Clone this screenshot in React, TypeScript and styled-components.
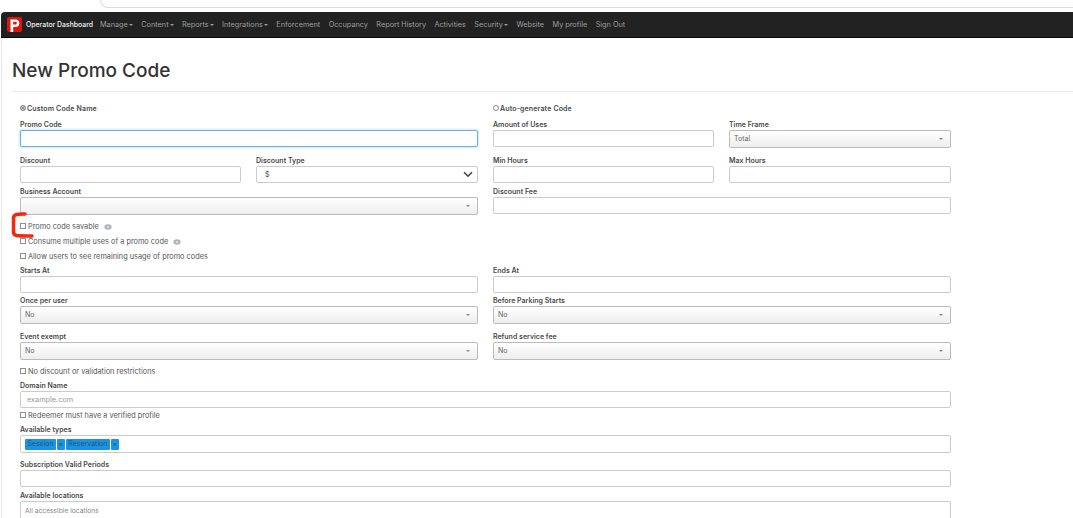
import React from "react";
import styled, { createGlobalStyle } from "styled-components";

const Global = createGlobalStyle`
  html, body { margin: 0; padding: 0; height: 518px; overflow: hidden; background: #fff; }
  body { font-family: Inter, "Open Sans", "Liberation Sans", sans-serif; color: #444; }
  * { box-sizing: border-box; }
`;

const Page = styled.div`
  position: relative;
  width: 1073px;
  height: 518px;
  overflow: hidden;
`;

const BrowserEdge = styled.div`
  height: 12px;
  padding-left: 100px;
`;

const BrowserBar = styled.div`
  height: 8px;
  border-left: 1px solid #ddd;
  border-bottom: 1px solid #ddd;
  border-bottom-left-radius: 9px;
`;

const Frame = styled.div`
  margin-left: 1px;
  border-left: 1px solid #e6e6e6;
  height: 506px;
`;

const Navbar = styled.nav`
  height: 26px;
  background: #222;
  border-bottom: 1px solid #080808;
  border-top-left-radius: 4px;
  display: flex;
  align-items: center;
  padding-left: 6px;
  margin-left: -1px;
`;

const Logo = styled.svg`
  width: 15px;
  height: 15px;
  flex: none;
  margin-right: 4px;
`;

const Brand = styled.a`
  font-size: 6.9px;
  font-weight: 500;
  color: #f2f2f2;
  margin-right: 7px;
  white-space: nowrap;
`;

const NavItem = styled.a`
  font-size: 7.3px;
  color: #9d9d9d;
  margin-right: 8.4px;
  white-space: nowrap;
  display: inline-flex;
  align-items: center;
`;

const Caret = styled.i`
  display: inline-block;
  width: 0;
  height: 0;
  margin-left: 1px;
  border-left: 2px solid transparent;
  border-right: 2px solid transparent;
  border-top: 2px solid currentColor;
`;

const Header = styled.header`
  margin-left: 10px;
  height: 54px;
  border-bottom: 1px solid #e8e8e8;
  display: flex;
  align-items: flex-end;
  padding-bottom: 9px;
`;

const Title = styled.h1`
  margin: 0;
  font-size: 19px;
  line-height: 22px;
  font-weight: 500;
  color: #333;
`;

const Form = styled.form`
  padding: 11px 0 0 18px;
  width: 949px;
  display: flex;
  flex-direction: column;
`;

const Row = styled.div<{ $mb?: number }>`
  display: grid;
  grid-template-columns: 221px 222px 221px 222px;
  column-gap: 15px;
  margin-bottom: ${(p) => p.$mb ?? 0}px;
`;

const Field = styled.div<{ $span?: number }>`
  grid-column: span ${(p) => p.$span ?? 1};
  min-width: 0;
`;

const Label = styled.label`
  display: block;
  height: 10px;
  line-height: 12px;
  margin-bottom: 1px;
  font-size: 7px;
  font-weight: 600;
  color: #4a4a4a;
  white-space: nowrap;
`;

const RadioLabel = styled(Label)`
  display: flex;
  align-items: center;
  line-height: 10px;
  margin-bottom: 0;
  padding-top: 2px;
  letter-spacing: 0.15px;
`;

const Radio = styled.input`
  appearance: none;
  width: 6px;
  height: 6px;
  margin: 0 1px 2px 0;
  border: 1px solid #8a8a8a;
  border-radius: 50%;
  background: #fff;
  &:checked { background: #777; box-shadow: inset 0 0 0 1px #ddd; }
`;

const TextInput = styled.input<{ $h?: number; $focus?: boolean }>`
  display: block;
  width: 100%;
  height: ${(p) => p.$h ?? 17}px;
  padding: 0 6px;
  border: 1px solid ${(p) => (p.$focus ? "#66afe9" : "#ccc")};
  border-radius: 2px;
  background: #fff;
  font: inherit;
  font-size: 7.3px;
  color: #555;
  outline: none;
  box-shadow: ${(p) => (p.$focus ? "0 0 3px rgba(102,175,233,.6)" : "none")};
  &::placeholder { color: #999; }
`;

const SelectBox = styled.div<{ $h?: number }>`
  height: ${(p) => p.$h ?? 18}px;
  padding: 0 7px 1px 4px;
  border: 1px solid #bbb;
  border-radius: 2px;
  background: linear-gradient(#fff, #eee);
  display: flex;
  align-items: center;
  justify-content: space-between;
  font-size: 7px;
  color: #666;
`;

const NativeSelect = styled.div`
  height: 17px;
  padding: 0 4px 0 8px;
  border: 1px solid #ccc;
  border-radius: 2px;
  background: #fff;
  display: flex;
  align-items: center;
  justify-content: space-between;
  font-size: 7.3px;
  color: #555;
`;

const SmallCaret = styled.i`
  width: 0;
  height: 0;
  border-left: 2px solid transparent;
  border-right: 2px solid transparent;
  border-top: 2px solid #888;
`;

const CheckRow = styled.label<{ $mb?: number }>`
  display: flex;
  align-items: center;
  height: 10px;
  padding-top: 1px;
  margin-bottom: ${(p) => p.$mb ?? 0}px;
  font-size: 7.35px;
  color: #555;
  white-space: nowrap;
`;

const Check = styled.input`
  appearance: none;
  width: 6px;
  height: 6px;
  margin: 0 2px 1px 0;
  border: 1px solid #8f8f8f;
  background: #fff;
  border-radius: 0;
`;

const Help = styled.svg`
  width: 8px;
  height: 6px;
  margin-left: 5px;
`;

const TagBox = styled.div`
  height: 18px;
  border: 1px solid #ccc;
  border-radius: 2px;
  background: #fff;
  display: flex;
  align-items: center;
  padding-left: 4px;
  gap: 1px;
`;

const Tag = styled.span`
  height: 11px;
  background: #1a94e0;
  color: #24557c;
  border-radius: 1px;
  font-size: 7px;
  line-height: 10px;
  padding: 0 2.6px;
`;

const TagRemove = styled(Tag)`
  padding: 0;
  width: 7.5px;
  text-align: center;
`;

const LocationBox = styled.div`
  height: 30px;
  border: 1px solid #ccc;
  border-radius: 2px;
  padding: 5px 4px;
  font-size: 6.7px;
  color: #888;
`;

const Marker = styled.svg`
  position: absolute;
  left: 10px;
  top: 211px;
  width: 24px;
  height: 28px;
`;

const navItems: [string, boolean][] = [
  ["Manage", true],
  ["Content", true],
  ["Reports", true],
  ["Integrations", true],
  ["Enforcement", false],
  ["Occupancy", false],
  ["Report History", false],
  ["Activities", false],
  ["Security", true],
  ["Website", false],
  ["My profile", false],
  ["Sign Out", false],
];

const HelpIcon = () => (
  <Help viewBox="0 0 8 6">
    <ellipse cx="4" cy="3" rx="3.6" ry="2.7" fill="#b0b4b4" />
    <circle cx="4" cy="3" r="1" fill="#e8e8e8" />
  </Help>
);

const Select = ({ value = "" }: { value?: string }) => (
  <SelectBox>
    <span>{value}</span>
    <SmallCaret />
  </SelectBox>
);

export default function App() {
  return (
    <Page>
      <Global />
      <BrowserEdge>
        <BrowserBar />
      </BrowserEdge>
      <Frame>
        <Navbar>
          <Logo viewBox="0 0 15 15">
            <rect width="15" height="15" rx="2" fill="#d9190f" />
            <path
              fillRule="evenodd"
              d="M3.5 2.5h5.1a3.7 3.7 0 0 1 0 7.4H6.2V15H3.5zM6.2 4.8v2.8h2.2a1.4 1.4 0 0 0 0-2.8z"
              fill="#fff"
            />
          </Logo>
          <Brand>Operator Dashboard</Brand>
          {navItems.map(([name, hasCaret]) => (
            <NavItem key={name}>
              {name}
              {hasCaret && <Caret />}
            </NavItem>
          ))}
        </Navbar>
        <Header>
          <Title>New Promo Code</Title>
        </Header>
        <Form>
          <Row $mb={6}>
            <Field $span={2}>
              <RadioLabel>
                <Radio type="radio" name="code" defaultChecked />
                Custom Code Name
              </RadioLabel>
            </Field>
            <Field $span={2}>
              <RadioLabel>
                <Radio type="radio" name="code" />
                Auto-generate Code
              </RadioLabel>
            </Field>
          </Row>
          <Row $mb={7}>
            <Field $span={2}>
              <Label>Promo Code</Label>
              <TextInput $focus />
            </Field>
            <Field>
              <Label>Amount of Uses</Label>
              <TextInput />
            </Field>
            <Field>
              <Label>Time Frame</Label>
              <Select value="Total" />
            </Field>
          </Row>
          <Row $mb={3}>
            <Field>
              <Label>Discount</Label>
              <TextInput />
            </Field>
            <Field>
              <Label>Discount Type</Label>
              <NativeSelect>
                <span>$</span>
                <svg width="10" height="7" viewBox="0 0 10 7">
                  <path d="M1 1.2l4 4 4-4" fill="none" stroke="#444" strokeWidth="1.6" />
                </svg>
              </NativeSelect>
            </Field>
            <Field>
              <Label>Min Hours</Label>
              <TextInput />
            </Field>
            <Field>
              <Label>Max Hours</Label>
              <TextInput />
            </Field>
          </Row>
          <Row $mb={6}>
            <Field $span={2}>
              <Label>Business Account</Label>
              <Select />
            </Field>
            <Field $span={2}>
              <Label>Discount Fee</Label>
              <TextInput />
            </Field>
          </Row>
          <CheckRow $mb={5}>
            <Check type="checkbox" />
            Promo code savable
            <HelpIcon />
          </CheckRow>
          <CheckRow $mb={5}>
            <Check type="checkbox" />
            Consume multiple uses of a promo code
            <HelpIcon />
          </CheckRow>
          <CheckRow $mb={4}>
            <Check type="checkbox" />
            Allow users to see remaining usage of promo codes
          </CheckRow>
          <Row $mb={2}>
            <Field $span={2}>
              <Label>Starts At</Label>
              <TextInput />
            </Field>
            <Field $span={2}>
              <Label>Ends At</Label>
              <TextInput />
            </Field>
          </Row>
          <Row $mb={7}>
            <Field $span={2}>
              <Label>Once per user</Label>
              <Select value="No" />
            </Field>
            <Field $span={2}>
              <Label>Before Parking Starts</Label>
              <Select value="No" />
            </Field>
          </Row>
          <Row $mb={6}>
            <Field $span={2}>
              <Label>Event exempt</Label>
              <Select value="No" />
            </Field>
            <Field $span={2}>
              <Label>Refund service fee</Label>
              <Select value="No" />
            </Field>
          </Row>
          <CheckRow $mb={4}>
            <Check type="checkbox" />
            No discount or validation restrictions
          </CheckRow>
          <Row $mb={2}>
            <Field $span={4}>
              <Label>Domain Name</Label>
              <TextInput $h={17} placeholder="example.com" />
            </Field>
          </Row>
          <CheckRow $mb={4}>
            <Check type="checkbox" />
            Redeemer must have a verified profile
          </CheckRow>
          <Row $mb={6}>
            <Field $span={4}>
              <Label>Available types</Label>
              <TagBox>
                <Tag>Session</Tag>
                <TagRemove>×</TagRemove>
                <Tag>Reservation</Tag>
                <TagRemove>×</TagRemove>
              </TagBox>
            </Field>
          </Row>
          <Row $mb={3}>
            <Field $span={4}>
              <Label>Subscription Valid Periods</Label>
              <TextInput />
            </Field>
          </Row>
          <Row>
            <Field $span={4}>
              <Label>Available locations</Label>
              <LocationBox>All accessible locations</LocationBox>
            </Field>
          </Row>
        </Form>
      </Frame>
      <Marker viewBox="0 0 24 28">
        <path
          d="M15 3C9 3 4 2.5 3.5 6.5L3.5 21C3.5 25 6 25 22 25"
          fill="none"
          stroke="#f0290f"
          strokeWidth="3.5"
          strokeLinecap="round"
        />
      </Marker>
    </Page>
  );
}
